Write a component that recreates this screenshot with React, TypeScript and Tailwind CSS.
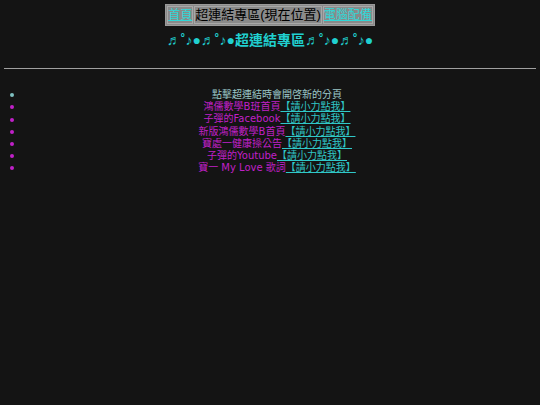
const items = [
  { label: '鴻儒數學B班首頁' },
  { label: '子彈的Facebook' },
  { label: '新版鴻儒數學B首頁' },
  { label: '寶處一健康操公告' },
  { label: '子彈的Youtube' },
  { label: '寶一 My Love 歌詞' },
]

export default function App() {
  return (
    <div
      className="min-h-[405px] bg-[#141414] pt-1"
      style={{ fontFamily: '"Liberation Sans", "Noto Sans CJK TC", sans-serif' }}
    >
      <div className="flex justify-center">
        <table className="border border-[#9a9a9a] bg-[#8a8a8a] border-separate border-spacing-[1px] leading-[16px]">
          <tbody>
            <tr>
              <td className="border border-[#a8a8a8] text-[12px]">
                <a className="text-[#30d8d8] underline">首頁</a>
              </td>
              <td className="border border-[#a8a8a8] text-[13px] text-black">超連結專區(現在位置)</td>
              <td className="border border-[#a8a8a8] text-[12px]">
                <a className="text-[#30d8d8] underline">電腦配備</a>
              </td>
            </tr>
          </tbody>
        </table>
      </div>
      <h2 className="mt-[5px] text-center text-[14px] leading-[18px] font-bold text-[#20d0d0]">
        ♬˚♪●♬˚♪●超連結專區♬˚♪●♬˚♪●
      </h2>
      <hr className="mx-1 mt-[19px] border-t border-[#a0a0a0]" />
      <ul
        className="mt-[20px] pl-[10px] text-[10px] leading-[12.2px] text-center"
        style={{ fontFamily: '"DejaVu Sans", "Noto Sans CJK TC", sans-serif' }}
      >
        <li className="flex items-center text-[#9cc8c8]">
          <span className="h-[4px] w-[4px] shrink-0 rounded-full bg-[#7fc0c0]" />
          <span className="flex-1">點擊超連結時會開啓新的分頁</span>
        </li>
        {items.map((it) => (
          <li key={it.label} className="flex items-center text-[#c020c8]">
            <span className="h-[4px] w-[4px] shrink-0 rounded-full bg-[#c020c8]" />
            <span className="flex-1">
              {it.label}
              <a className="text-[#30c8c8] underline">【請小力點我】</a>
            </span>
          </li>
        ))}
      </ul>
    </div>
  )
}
